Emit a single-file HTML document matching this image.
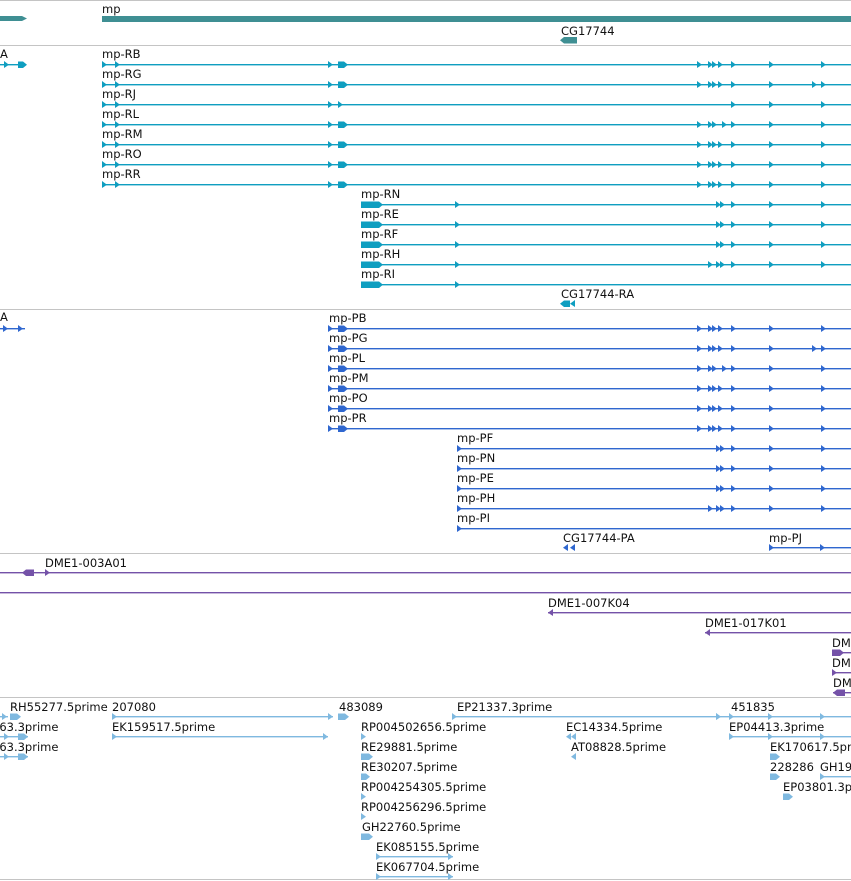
<!DOCTYPE html>
<html><head><meta charset="utf-8"><style>
html,body{margin:0;padding:0;background:#fff;}
svg{display:block;}
text{font-family:"DejaVu Sans","Liberation Sans",sans-serif;font-size:11.5px;fill:#111;}
</style></head><body>
<svg id="s" width="851" height="881" xmlns="http://www.w3.org/2000/svg"></svg>
<script>
const s=document.getElementById('s');let h='';
const sep=y=>h+=`<rect x="0" y="${y}" width="851" height="1" fill="#c4c4c4"/>`;
const line=(x1,x2,y,c)=>h+=`<rect x="${x1}" y="${y}" width="${x2-x1}" height="1.4" fill="${c}"/>`;
const ar=(x,y,c)=>h+=`<path d="M${x} ${y-3}L${x+5} ${y+0.7}L${x} ${y+4}Z" fill="${c}"/>`;
const al=(x,y,c)=>h+=`<path d="M${x+5} ${y-3}L${x} ${y+0.7}L${x+5} ${y+4}Z" fill="${c}"/>`;
const br=(x,w,y,c)=>h+=`<path d="M${x} ${y-2.5}L${x+w-4} ${y-2.5}L${x+w} ${y+0.7}L${x+w-4} ${y+4}L${x} ${y+4}Z" fill="${c}"/>`;
const bl=(x,w,y,c)=>h+=`<path d="M${x+4} ${y-2.5}L${x+w} ${y-2.5}L${x+w} ${y+4}L${x+4} ${y+4}L${x} ${y+0.7}Z" fill="${c}"/>`;
const t=(x,y,str)=>h+=`<text x="${x}" y="${y+1}">${str}</text>`;
sep(0);sep(45);sep(309);sep(553);sep(697);sep(879);
const G='#3f8f93';
h+=`<path d="M0 16H22L27 18.5L22 21H0Z" fill="${G}"/>`;
h+=`<rect x="102" y="16" width="749" height="6" fill="${G}"/>`;
t(102,12,'mp');t(561,34,'CG17744');bl(560,17,39.5,G);
const C='#0f9ec0';
t(0,57,'A');line(0,26,64,C);ar(4,64,C);br(18,9,64,C);
const R=[['RB',[697,708,712,718,731,769,821],1],['RG',[697,708,712,718,731,769,812,821],1],['RJ',[731,769,821],0],['RL',[697,708,712,722,731,769,821],1],['RM',[697,708,712,718,731,769,821],1],['RO',[697,708,712,718,731,769,821],1],['RR',[697,708,712,718,731,769,821],1]];
R.forEach((r,i)=>{const y=64+i*20;t(102,y-7,'mp-'+r[0]);line(102,851,y,C);ar(102,y,C);ar(115,y,C);ar(328,y,C);if(r[2])br(338,10,y,C);else ar(338,y,C);r[1].forEach(x=>ar(x,y,C));});
const R2=[['RN',[716,720,731,769,821]],['RE',[716,720,731,769,821]],['RF',[716,720,731,769,821]],['RH',[708,716,720,731,769,821]],['RI',[]]];
R2.forEach((r,i)=>{const y=204+i*20;t(361,y-7,'mp-'+r[0]);line(361,851,y,C);br(361,22,y,C);ar(455,y,C);r[1].forEach(x=>ar(x,y,C));});
t(561,297,'CG17744-RA');bl(560,10,303,C);al(570,303,C);
const P='#2f67cf';
t(0,320,'A');line(0,25,328,P);ar(3,328,P);ar(18,328,P);
const PR=[['PB',[697,708,712,718,731,769,821]],['PG',[697,708,712,718,731,769,812,821]],['PL',[697,708,712,722,731,769,821]],['PM',[697,708,712,718,731,769,821]],['PO',[697,708,712,718,731,769,821]],['PR',[697,708,712,718,731,769,821]]];
PR.forEach((r,i)=>{const y=328+i*20;t(329,y-7,'mp-'+r[0]);line(329,851,y,P);ar(328,y,P);br(338,10,y,P);r[1].forEach(x=>ar(x,y,P));});
const PR2=[['PF',[716,720,731,769,821]],['PN',[716,720,731,769,821]],['PE',[716,720,731,769,821]],['PH',[708,716,720,731,769,821]],['PI',[]]];
PR2.forEach((r,i)=>{const y=448+i*20;t(457,y-7,'mp-'+r[0]);line(457,851,y,P);ar(457,y,P);r[1].forEach(x=>ar(x,y,P));});
t(563,541,'CG17744-PA');al(563,547,P);al(570,547,P);
t(769,541,'mp-PJ');line(769,851,547,P);ar(769,547,P);ar(820,547,P);
const V='#7452a8';
line(0,851,572,V);bl(22,12,572,V);ar(45,572,V);t(45,566,'DME1-003A01');
line(0,851,592,V);
t(548,606,'DME1-007K04');line(548,851,612,V);al(548,612,V);
t(705,626,'DME1-017K01');line(705,851,632,V);al(705,632,V);
t(832,646,'DM');line(832,851,652,V);br(832,12,652,V);
t(832,666,'DM');line(832,851,672,V);ar(832,672,V);
t(833,686,'DM');line(833,851,692,V);bl(833,12,692,V);
const E='#7fb9e0';
let y=716;
line(0,8,y,E);ar(2,y,E);br(10,11,y,E);t(10,710,'RH55277.5prime');t(112,710,'207080');
line(112,333,y,E);ar(112,y,E);ar(328,y,E);br(338,11,y,E);t(339,710,'483089');
t(457,710,'EP21337.3prime');line(452,722,y,E);ar(452,y,E);ar(716,y,E);t(731,710,'451835');line(722,851,y,E);ar(716,y,E);ar(729,y,E);ar(768,y,E);ar(820,y,E);
y=736;t(-8,730,'663.3prime');line(0,28,y,E);ar(4,y,E);br(18,10,y,E);t(112,730,'EK159517.5prime');line(112,328,y,E);ar(112,y,E);ar(323,y,E);
t(361,730,'RP004502656.5prime');ar(361,y,E);t(566,730,'EC14334.5prime');al(566,y,E);al(571,y,E);
t(729,730,'EP04413.3prime');line(729,851,y,E);ar(729,y,E);ar(768,y,E);ar(820,y,E);
y=756;t(-8,750,'663.3prime');line(0,28,y,E);ar(4,y,E);br(18,10,y,E);t(361,750,'RE29881.5prime');br(361,12,y,E);t(571,750,'AT08828.5prime');al(571,y,E);t(770,750,'EK170617.5prime');br(770,10,y,E);
y=776;t(361,770,'RE30207.5prime');br(361,9,y,E);t(770,770,'228286');br(770,10,y,E);t(820,770,'GH19');line(820,851,y,E);ar(820,y,E);
y=796;t(361,790,'RP004254305.5prime');ar(361,y,E);t(783,790,'EP03801.3prime');br(783,10,y,E);
y=816;t(361,810,'RP004256296.5prime');ar(361,y,E);
y=836;t(362,830,'GH22760.5prime');br(361,12,y,E);
y=856;t(376,850,'EK085155.5prime');line(376,453,y,E);ar(376,y,E);ar(448,y,E);
y=876;t(376,870,'EK067704.5prime');line(376,453,y,E);ar(376,y,E);ar(448,y,E);
s.innerHTML=h;
</script>
</body></html>
